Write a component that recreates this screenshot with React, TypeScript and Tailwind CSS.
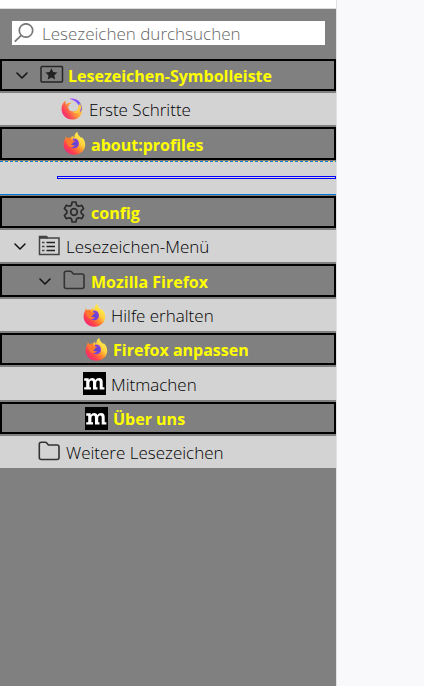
import { useState, type ReactNode } from "react";

function SearchIcon() {
  return (
    <svg className="h-5 w-5 shrink-0" viewBox="0 0 20 20" fill="none" stroke="#777" strokeWidth="1.7" aria-hidden="true">
      <circle cx="12" cy="7.5" r="6.7" />
      <path d="M7.2 12.3 .8 18.7" />
    </svg>
  );
}

function Chevron() {
  return (
    <svg className="h-3 w-3" viewBox="0 0 12 12" fill="none" stroke="#111" strokeWidth="1.5" strokeLinecap="round" strokeLinejoin="round" aria-hidden="true">
      <path d="m1 4 5 5 5-5" />
    </svg>
  );
}

function ToolbarIcon() {
  return (
    <svg className="h-[22px] w-6" viewBox="0 0 24 22" fill="none" aria-hidden="true">
      <rect x="0" y="2.5" width="21.5" height="15.5" rx="1" stroke="#252525" strokeWidth="1.5" className="translate-x-px" />
      <path d="m11.4 4.3 1.8 3.7 4.1.6-3 2.8.8 4.1-3.7-2-3.7 2 .8-4.1-3-2.8 4.1-.6z" fill="#222" />
    </svg>
  );
}

function MenuIcon() {
  return (
    <svg className="h-[22px] w-[22px]" viewBox="0 0 22 22" fill="none" stroke="#444" strokeWidth="1.5" aria-hidden="true">
      <path d="M1.5 19.5v-18h7l1 1.5H21v16.5z" />
      <path d="M1.5 2.8h8" strokeWidth="2" />
      <path d="M4 7.500h2.500M4 11.500h2.500M4 15.500h2.500" />
      <path d="M8.500 7.500h8.500M8.500 11.500h8.500M8.500 15.500h8.500" stroke="#222" />
    </svg>
  );
}

function FolderIcon() {
  return (
    <svg className="h-[22px] w-[22px]" viewBox="0 0 22 22" fill="none" stroke="#333" strokeWidth="1.6" strokeLinejoin="round" aria-hidden="true">
      <path d="M1.300 16.500V3.300q0-2 2-2h3.900q1 0 1.600.8l1.600 1.900h8.600q2 0 2 2v10.500q0 2-2 2H3.300q-2 0-2-2z" />
    </svg>
  );
}

function GearIcon() {
  return (
    <svg className="h-[22px] w-[22px]" viewBox="0 0 22 22" fill="none" stroke="#2b2b2b" strokeWidth="1.7" strokeLinejoin="round" aria-hidden="true">
      <path d="M9.2 1h3.6l.8 3.2 1.9 1.1 3.3-.9 1.8 3.2-2.4 2.3v2.2l2.4 2.3-1.8 3.2-3.3-.9-1.9 1.1-.8 3.2H9.2l-.8-3.2-1.9-1.1-3.3.9-1.8-3.2 2.4-2.3V9.9L1.4 7.6l1.8-3.2 3.3.9 1.9-1.1z" />
      <circle cx="11" cy="11" r="3.3" />
    </svg>
  );
}

function BrowserRingIcon() {
  return (
    <svg className="h-[22px] w-[22px]" viewBox="0 0 22 22" aria-hidden="true">
      <defs>
        <linearGradient id="ringWarm" x1="0.9" y1="0.3" x2="0.15" y2="0.8">
          <stop offset="0" stopColor="#ffe04a" />
          <stop offset="0.45" stopColor="#ff9a3a" />
          <stop offset="0.8" stopColor="#ff4b54" />
          <stop offset="1" stopColor="#f52f70" />
        </linearGradient>
        <linearGradient id="ringCool" x1="0" y1="0" x2="1" y2="1">
          <stop offset="0" stopColor="#b34bf0" />
          <stop offset="0.6" stopColor="#6a54ff" />
          <stop offset="1" stopColor="#9065e8" />
        </linearGradient>
      </defs>
      <path d="M5 2.3C2 4.2.4 7.6.5 11.3.7 17 5.3 21.6 11 21.6c6 0 10.500-4.600 10.500-10.200 0-2.500-.8-5-2.500-6.900.4 4-1.700 8.500-6.200 8.900-3.300.3-5.700-1.700-5.500-4.400.2-1.800 1.500-3.300 3.500-4C8.600 4.200 6.600 4.900 5 6.400c-.5-1.300-.5-2.600 0-4.100z" fill="url(#ringWarm)" />
      <path d="M8.500.7c6-1.500 12.600 2.700 12.500 10.600-.3 1.500-.9 2.700-1.800 3.500C20 8.500 16.500 3 8.500.7z" fill="url(#ringCool)" />
      <path d="M17.300 7.500c.2 3.600-1.600 6.500-5.100 6.700 3.600 2.200 7.600-.1 7.900-4.700 0-1.800-.6-3.400-1.600-4.500.2 1.500-.1 2.300-1.200 2.500z" fill="#ffc94c" />
    </svg>
  );
}

function FirefoxIcon() {
  return (
    <svg className="h-[23px] w-[23px]" viewBox="0 0 23 23" aria-hidden="true">
      <defs>
        <linearGradient id="foxBody" x1="0.85" y1="0.1" x2="0.15" y2="0.9">
          <stop offset="0" stopColor="#fff24d" />
          <stop offset="0.33" stopColor="#ffd03e" />
          <stop offset="0.55" stopColor="#ff8a2d" />
          <stop offset="0.8" stopColor="#ff3f4d" />
          <stop offset="1" stopColor="#f0287a" />
        </linearGradient>
        <radialGradient id="foxGlobe" cx="0.5" cy="0.55" r="0.6">
          <stop offset="0" stopColor="#5b45d6" />
          <stop offset="0.6" stopColor="#7542d6" />
          <stop offset="1" stopColor="#9a45d0" />
        </radialGradient>
      </defs>
      <path d="M3 4.200c.4 1 .9 1.700 1.500 2.100 1-.5 2-.7 3.100-.5C8.500 4.600 9.500 4 10.800 3.700c-.6.8-.8 1.400-.7 2 1.100-.3 1.700-.8 1.500-2.100C11.800 1.800 12.800.7 14.300 0c.4 3 2.300 4 4 6l.4-.9c2.200 2.200 3.500 4.800 3.500 7.700 0 5.700-4.800 9.900-10.800 9.900C5.200 22.700.6 18.200.6 12.400c0-2.600.8-4.700 1.800-6.200 0-.7.200-1.400.6-2z" fill="url(#foxBody)" />
      <path d="M10.200 6.600c3.200-.6 5.800 1.400 5.800 4.800 0 3-2 4.900-4.700 4.900S6.500 14.400 6.500 12.200c0-1.200.5-2 1.200-2.600.6-.5 1.300-.8 2.100-.8-.2-.6-.1-1.500.4-2.200z" fill="url(#foxGlobe)" />
      <path d="M3.200 6.300c1.600-.9 3.900-.8 5.200.1-.3.700-.3 1.400.2 2.100h2.700c.7.200.5.9.1 1.200-.7.500-1.400.7-1.600 1.400-.1.700-.8.900-1.600 1 .5 1.300 2.300 1.400 3.900.8-.9 1.800-3 2.600-4.900 1.800-2.100-.9-3.200-2.500-3.200-4.800-.1-1.500-.4-2.600-.8-3.600z" fill="#ff7a2c" />
    </svg>
  );
}

function MozillaIcon() {
  return (
    <svg className="h-[23px] w-[23px]" viewBox="0 0 23 23" aria-hidden="true">
      <rect width="23" height="23" fill="#000" />
      <path d="M1.200 6.300h4.500v1.800C6.500 6.700 7.700 6 9.200 6c1.600 0 2.700.8 3.200 2.300.8-1.600 2-2.300 3.700-2.300 2.400 0 3.600 1.500 3.600 4.100v5.200h1.700v2.300h-4.700v-6.800c0-1.500-.4-2.200-1.500-2.200-1.400 0-2 1.100-2 2.900v3.800h1.300v2.300H10v-6.800c0-1.500-.4-2.200-1.500-2.200-1.400 0-2.100 1.100-2.100 2.900v3.800H8v2.300H1.200v-2.300h2V8.700h-2z" fill="#fff" />
    </svg>
  );
}

type RowProps = {
  label: string;
  icon: ReactNode;
  level?: 0 | 1 | 2;
  selected?: boolean;
  folder?: boolean;
  tall?: boolean;
};

const indents = ["pl-[14px]", "pl-[37px]", "pl-[59px]"];

function Row({ label, icon, level = 0, selected, folder, tall }: RowProps) {
  return (
    <li role="none">
      <button
        type="button"
        role="treeitem"
        aria-level={level + 1}
        aria-selected={selected ?? false}
        aria-expanded={folder ? true : undefined}
        className={`flex w-full items-center text-left whitespace-nowrap ${tall ? "h-[33px]" : "h-8"} ${indents[level]} ${
          selected
            ? "border-2 border-black bg-[#808080] text-[16px] font-bold text-[#ffff00]"
            : "bg-[#d3d3d3] text-[17px] text-black"
        }`}
      >
        <span className="mr-3 w-3 shrink-0">{folder && <Chevron />}</span>
        <span className="mr-1.5 w-[22px] shrink-0">{icon}</span>
        <span className="pt-0.5">{label}</span>
      </button>
    </li>
  );
}

export default function App() {
  const [query, setQuery] = useState("");
  return (
    <div className="flex min-h-screen bg-[#f9f9fb] font-['Open_Sans','Noto_Sans',sans-serif] text-[17px] leading-6 font-light">
      <aside className="flex w-[337px] flex-col border-r border-[#e0e0e6] bg-[#808080]">
        <div className="h-[9px] border-b border-[#dcdcdc] bg-white" />
        <div className="pt-3 pr-[11px] pb-3.5 pl-3">
          <label className="flex h-6 items-center gap-2 bg-white pl-0.5">
            <SearchIcon />
            <input
              type="text"
              aria-label="Lesezeichen durchsuchen"
              placeholder="Lesezeichen durchsuchen"
              value={query}
              onChange={(e) => setQuery(e.target.value)}
              className="h-6 min-w-0 flex-1 bg-transparent pt-0.5 outline-none placeholder:text-[#666]"
            />
          </label>
        </div>
        <ul role="tree" aria-label="Lesezeichen" className="flex flex-col gap-0.5">
          <Row label="Lesezeichen-Symbolleiste" icon={<ToolbarIcon />} selected folder />
          <Row label="Erste Schritte" icon={<BrowserRingIcon />} level={1} />
          <Row label="about:profiles" icon={<FirefoxIcon />} level={1} selected tall />
          <li role="separator" className="-my-px flex flex-col bg-[#d3d3d3]">
            <div className="h-px bg-[repeating-linear-gradient(90deg,#0078d7_0_3px,#ffe48a_3px_5px)]" />
            <div className="h-8 pt-3.5 pl-[57px]">
              <div className="bg-[#0000ff] p-px">
                <div className="h-px bg-[#d3d3d3]" />
              </div>
            </div>
            <div className="h-px bg-[#0078d7]" />
          </li>
          <Row label="config" icon={<GearIcon />} level={1} selected />
          <Row label="Lesezeichen-Menü" icon={<MenuIcon />} folder />
          <Row label="Mozilla Firefox" icon={<FolderIcon />} level={1} selected folder tall />
          <Row label="Hilfe erhalten" icon={<FirefoxIcon />} level={2} />
          <Row label="Firefox anpassen" icon={<FirefoxIcon />} level={2} selected />
          <Row label="Mitmachen" icon={<MozillaIcon />} level={2} tall />
          <Row label="Über uns" icon={<MozillaIcon />} level={2} selected />
          <Row label="Weitere Lesezeichen" icon={<FolderIcon />} />
        </ul>
      </aside>
      <main className="flex-1" />
    </div>
  );
}
